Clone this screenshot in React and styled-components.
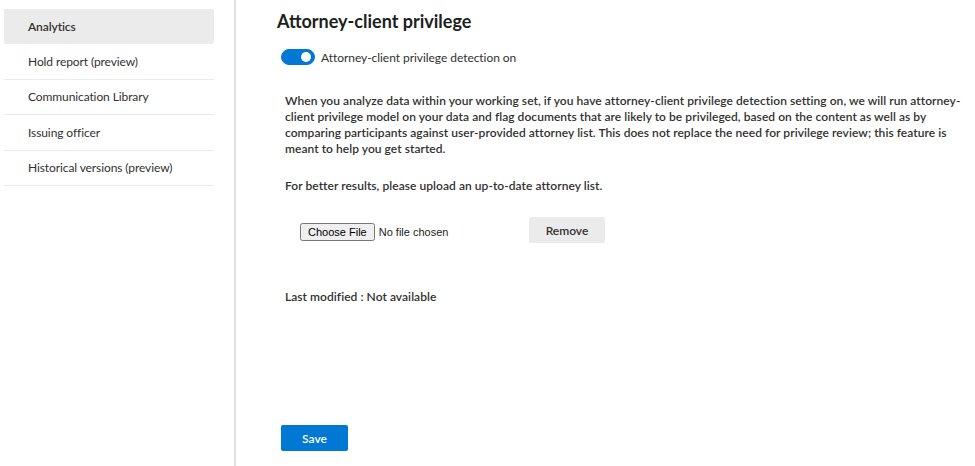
import React, { useState } from 'react'
import styled, { createGlobalStyle } from 'styled-components'

const GlobalStyle = createGlobalStyle`
  html, body {
    margin: 0;
    padding: 0;
    background: #ffffff;
  }
  body {
    font-family: Lato, "Noto Sans", sans-serif;
    color: #323130;
  }
`

const Page = styled.div`
  display: flex;
  height: 466px;
  background: #ffffff;
`

const Sidebar = styled.nav`
  width: 236px;
  flex-shrink: 0;
  border-right: 2px solid #e1e1e1;
  padding: 9px 0 0 4px;
  box-sizing: border-box;
`

const NavItem = styled.div`
  width: 210px;
  height: ${p => (p.active ? '35px' : '35.5px')};
  box-sizing: border-box;
  display: flex;
  align-items: center;
  padding-left: 24px;
  font-size: 12px;
  letter-spacing: -0.1px;
  color: #323130;
  font-weight: ${p => (p.active ? 600 : 400)};
  background: ${p => (p.active ? '#ebebeb' : 'transparent')};
  border-radius: ${p => (p.active ? '2px' : '0')};
  border-bottom: ${p => (p.active ? 'none' : '1px solid #edebe9')};
  cursor: pointer;
`

const Main = styled.main`
  flex: 1;
  padding: 10px 0 0 41px;
  display: flex;
  flex-direction: column;
`

const Heading = styled.h2`
  margin: 0;
  font-size: 18px;
  line-height: 22px;
  font-weight: 700;
  color: #201f1e;
`

const ToggleRow = styled.label`
  display: flex;
  align-items: center;
  gap: 6px;
  margin: 17px 0 0 4px;
  font-size: 12px;
  letter-spacing: -0.05px;
  color: #323130;
`

const Track = styled.span`
  width: 34px;
  height: 16px;
  border-radius: 8px;
  background: ${p => (p.on ? '#0078d4' : '#ffffff')};
  border: 1px solid ${p => (p.on ? '#0078d4' : '#605e5c')};
  box-sizing: border-box;
  display: flex;
  align-items: center;
  justify-content: ${p => (p.on ? 'flex-end' : 'flex-start')};
  padding: 0 3px;
  cursor: pointer;
`

const Thumb = styled.span`
  width: 10px;
  height: 10px;
  border-radius: 50%;
  background: ${p => (p.on ? '#ffffff' : '#605e5c')};
`

const Text = styled.p`
  margin: ${p => p.mt || 0}px 0 0 8px;
  width: 684px;
  font-size: 12px;
  line-height: 16px;
  letter-spacing: 0.05px;
  font-weight: 600;
  color: #323130;
`

const FileRow = styled.div`
  display: flex;
  align-items: center;
  margin: 23px 0 0 23px;
  height: 26px;
`

const FileSlot = styled.div`
  width: 229px;
  margin-top: 1px;

  input {
    font-family: "Liberation Sans", Arial, sans-serif;
    font-size: 11px;
    color: #222;
  }
`

const GreyButton = styled.button`
  width: 76px;
  height: 26px;
  border: none;
  border-radius: 2px;
  background: #ebebeb;
  font-family: Lato, sans-serif;
  font-size: 12px;
  font-weight: 600;
  color: #323130;
  cursor: pointer;
`

const Spacer = styled.div`
  flex: 1;
`

const PrimaryButton = styled.button`
  width: 67px;
  height: 26px;
  margin: 0 0 15px 4px;
  border: none;
  border-radius: 2px;
  background: #0078d4;
  color: #ffffff;
  font-family: Lato, sans-serif;
  font-size: 12px;
  font-weight: 600;
  cursor: pointer;
`

const navItems = [
  'Analytics',
  'Hold report (preview)',
  'Communication Library',
  'Issuing officer',
  'Historical versions (preview)',
]

export default function App() {
  const [on, setOn] = useState(true)
  const [active, setActive] = useState(0)

  return (
    <>
      <GlobalStyle />
      <Page>
        <Sidebar>
          {navItems.map((item, i) => (
            <NavItem key={item} active={i === active} onClick={() => setActive(i)}>
              {item}
            </NavItem>
          ))}
        </Sidebar>
        <Main>
          <Heading>Attorney-client privilege</Heading>
          <ToggleRow onClick={() => setOn(!on)}>
            <Track on={on}>
              <Thumb on={on} />
            </Track>
            Attorney-client privilege detection on
          </ToggleRow>
          <Text mt={28}>
            When you analyze data within your working set, if you have attorney-client privilege detection setting on, we will run attorney-client privilege model on your data and flag documents that are likely to be privileged, based on the content as well as by comparing participants against user-provided attorney list. This does not replace the need for privilege review; this feature is meant to help you get started.
          </Text>
          <Text mt={21}>For better results, please upload an up-to-date attorney list.</Text>
          <FileRow>
            <FileSlot>
              <input type="file" />
            </FileSlot>
            <GreyButton>Remove</GreyButton>
          </FileRow>
          <Text mt={46}>Last modified : Not available</Text>
          <Spacer />
          <PrimaryButton>Save</PrimaryButton>
        </Main>
      </Page>
    </>
  )
}
